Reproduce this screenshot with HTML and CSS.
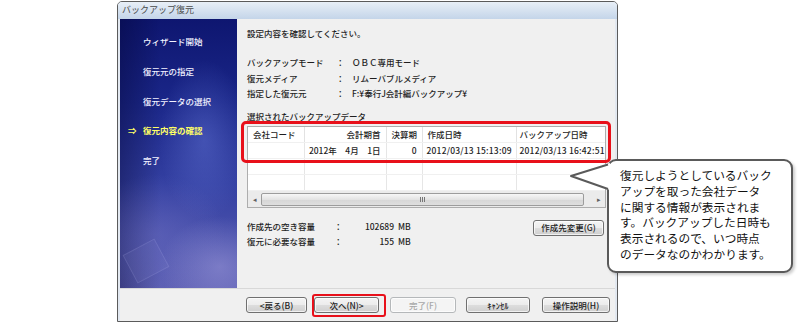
FILE: index.html
```html
<!DOCTYPE html>
<html lang="ja">
<head>
    <meta charset="UTF-8">
    <meta name="viewport" content="width=device-width, initial-scale=1.0">
    <title>バックアップ復元</title>
    <link rel="stylesheet" href="styles.css">
</head>
<body>
    <div class="window">
        <div class="titlebar">バックアップ復元</div>
        <div class="client">
            <div class="main">
                <ul class="steps">
                    <li>ウィザード開始</li>
                    <li>復元元の指定</li>
                    <li>復元データの選択</li>
                    <li class="current">復元内容の確認</li>
                    <li>完了</li>
                </ul>
                <div class="content">
                    <p class="lead">設定内容を確認してください。</p>
                    <div class="summary">
                        <span>バックアップモード</span><span>：</span><span>ＯＢＣ専用モード</span>
                        <span>復元メディア</span><span>：</span><span>リムーバブルメディア</span>
                        <span>指定した復元元</span><span>：</span><span>F:¥奉行J会計編バックアップ¥</span>
                    </div>
                    <p class="caption">選択されたバックアップデータ</p>
                    <div class="list">
                        <table class="grid">
                            <colgroup>
                                <col style="width:56px">
                                <col style="width:82px">
                                <col style="width:36px">
                                <col style="width:94px">
                                <col>
                            </colgroup>
                            <tr>
                                <th>会社コード</th>
                                <th class="right">会計期首</th>
                                <th>決算期</th>
                                <th>作成日時</th>
                                <th>バックアップ日時</th>
                            </tr>
                            <tr>
                                <td></td>
                                <td class="right">2012年　4月　1日</td>
                                <td class="right">0</td>
                                <td class="mono">2012/03/13 15:13:09</td>
                                <td class="mono">2012/03/13 16:42:51</td>
                            </tr>
                            <tr><td></td><td></td><td></td><td></td><td></td></tr>
                            <tr><td></td><td></td><td></td><td></td><td></td></tr>
                        </table>
                        <div class="hscroll">
                            <span class="arrow">&#9666;</span>
                            <span class="thumb"><i></i><i></i><i></i></span>
                            <span class="arrow">&#9656;</span>
                        </div>
                    </div>
                    <div class="space">
                        <div class="space-rows">
                            <span>作成先の空き容量</span><span>：</span><span class="num">102689</span><span>MB</span>
                            <span>復元に必要な容量</span><span>：</span><span class="num">155</span><span>MB</span>
                        </div>
                        <button class="btn btn-dest">作成先変更(G)</button>
                    </div>
                </div>
            </div>
            <div class="footer">
                <button class="btn btn-back">&lt;戻る(B)</button>
                <button class="btn btn-next">次へ(N)&gt;</button>
                <button class="btn btn-finish" disabled>完了(F)</button>
                <button class="btn btn-cancel">ｷｬﾝｾﾙ</button>
                <button class="btn btn-help">操作説明(H)</button>
            </div>
        </div>
    </div>

    <div class="mark mark-list"></div>
    <div class="mark mark-next"></div>

    <div class="balloon">
        復元しようとしているバック<br>
        アップを取った会社データ<br>
        に関する情報が表示されま<br>
        す。バックアップした日時も<br>
        表示されるので、いつ時点<br>
        のデータなのかわかります。
    </div>
    <svg class="balloon-tail" width="46" height="34" viewBox="0 0 46 34">
        <polygon points="42,3 3,16 42,30" fill="#fff"/>
        <rect x="37" y="4" width="6" height="25" fill="#fff"/>
        <polyline points="40,4.5 3,16 40,29" fill="none" stroke="#5a5a5a" stroke-width="2" stroke-linejoin="round"/>
    </svg>
</body>
</html>
```

FILE: styles.css
```css
* {
    box-sizing: border-box;
}
body {
    margin: 0;
    height: 323px;
    overflow: hidden;
    position: relative;
    background-color: #fff;
    font-family: "Noto Sans CJK JP", sans-serif;
    font-size: 8.5px;
    font-weight: 500;
    color: #1e1e1e;
}
.window {
    margin: 1px 0 0 117px;
    width: 501px;
    height: 321px;
    border: 1px solid #5b5b5b;
    border-radius: 5px 5px 0 0;
    background-color: #e2e8f0;
    display: flex;
    flex-direction: column;
}
.titlebar {
    height: 17px;
    padding-left: 4px;
    line-height: 16px;
    font-size: 9px;
    font-weight: 400;
    color: #4a4a4a;
    background: linear-gradient(#e8eff7, #c4d5e9);
    border-radius: 4px 4px 0 0;
}
.client {
    flex: 1;
    margin: 0 2px 0;
    background-color: #f0f0f0;
    display: flex;
    flex-direction: column;
}
.main {
    display: flex;
    height: 269px;
}

/* left wizard steps */
.steps {
    width: 117px;
    margin: 0;
    padding: 8px 0 0 23px;
    list-style: none;
    position: relative;
    overflow: hidden;
    background:
        radial-gradient(ellipse 45px 80px at 72% 45%, rgba(120, 140, 235, 0.35), transparent),
        radial-gradient(ellipse 60px 50px at 85% 92%, rgba(170, 165, 225, 0.45), transparent),
        radial-gradient(ellipse 70px 60px at 30% 80%, rgba(120, 120, 200, 0.35), transparent),
        linear-gradient(90deg, rgba(0, 0, 40, 0.35), transparent 35%),
        linear-gradient(#0e1670, #1a2688 30%, #3440a2 62%, #5d60b4);
}
.steps::after {
    content: "";
    position: absolute;
    left: 8px;
    top: 226px;
    width: 34px;
    height: 30px;
    border: 1px solid rgba(190, 190, 240, 0.15);
    background-color: rgba(160, 160, 230, 0.08);
    transform: rotate(-28deg);
}
.steps li {
    height: 29.8px;
    line-height: 29.8px;
    color: #f2f2ff;
}
.steps li.current {
    color: #ffff66;
    font-weight: bold;
}
.steps li.current::before {
    content: "⇒";
    display: inline-block;
    width: 15px;
    margin-left: -15px;
}

/* right side */
.content {
    flex: 1;
    padding: 7px 9px 0 10px;
}
.lead {
    margin: 0;
    line-height: 14px;
}
.summary {
    display: grid;
    grid-template-columns: 89px 16px auto;
    margin-top: 15px;
    line-height: 15.5px;
}
.caption {
    margin: 7px 0 0;
    line-height: 14px;
}
.list {
    margin-top: 3px;
    height: 82px;
    border: 1px solid #adadad;
    background-color: #fff;
}
.grid {
    width: 100%;
    border-collapse: collapse;
    table-layout: fixed;
}
.grid th,
.grid td {
    height: 16px;
    padding: 0 4px;
    border-right: 1px solid #e6e6e6;
    border-bottom: 1px solid #f0f0f0;
    font-weight: 500;
    text-align: left;
    white-space: nowrap;
    overflow: hidden;
    line-height: 15px;
}
.grid th {
    padding-left: 5px;
    border-right-color: #e2e2e2;
}
.grid th:last-child,
.grid td:last-child {
    border-right: none;
    padding-left: 3px;
}
.grid .right {
    text-align: right;
    padding-right: 5px;
}
.grid .mono {
    letter-spacing: 0.2px;
}
.hscroll {
    display: flex;
    align-items: center;
    height: 16px;
    background-color: #ebebeb;
    padding: 1px 0;
}
.arrow {
    width: 13px;
    text-align: center;
    font-size: 7px;
    color: #606060;
}
.thumb {
    flex: 1;
    height: 13px;
    margin-right: 8px;
    border: 1px solid #9c9c9c;
    border-radius: 2px;
    background: linear-gradient(#f6f6f6, #e3e3e3 50%, #d6d6d6 51%, #dedede);
    display: flex;
    justify-content: center;
    align-items: center;
    gap: 1px;
}
.thumb i {
    width: 1px;
    height: 5px;
    background-color: #777;
}
.space {
    display: flex;
    justify-content: space-between;
    align-items: flex-start;
    margin-top: 11px;
}
.space-rows {
    display: grid;
    grid-template-columns: 87px 18px 46px auto;
    line-height: 15.5px;
}
.space-rows .num {
    text-align: right;
    padding-right: 4px;
}

/* buttons */
.btn {
    height: 16px;
    padding: 0;
    border: 1px solid #707070;
    border-radius: 3px;
    background: linear-gradient(#f4f4f4, #ececec 50%, #dddddd 51%, #cfcfcf);
    box-shadow: inset 0 0 0 1px rgba(255, 255, 255, 0.7);
    font-family: inherit;
    font-size: 8.5px;
    font-weight: 500;
    line-height: 13px;
    color: #222;
}
.btn:disabled {
    border-color: #b5b8ba;
    background: #f4f4f4;
    color: #a8a8a8;
}
.btn-dest {
    width: 71px;
    margin: 1px 2px 0 0;
}
.footer {
    flex: 1;
    border-top: 1px solid #d8d8d8;
    display: flex;
    align-items: flex-start;
    padding: 8px 0 0 126px;
}
.btn-back {
    width: 61px;
}
.btn-next {
    width: 65px;
    margin-left: 7px;
}
.btn-finish {
    width: 66px;
    margin-left: 11px;
}
.btn-cancel {
    width: 64px;
    margin-left: 10px;
}
.btn-help {
    width: 68px;
    margin-left: 12px;
}

/* annotations over the screenshot */
.mark {
    position: absolute;
    border: 3px solid #e8101a;
    border-radius: 5px;
}
.mark-list {
    left: 241px;
    top: 121px;
    width: 370px;
    height: 42px;
}
.mark-next {
    left: 312px;
    top: 294px;
    width: 74px;
    height: 23px;
    border-width: 2px;
    border-radius: 3px;
}
.balloon {
    position: absolute;
    left: 607px;
    top: 159px;
    width: 186px;
    height: 114px;
    padding: 6px 0 0 11px;
    border: 2px solid #5a5a5a;
    border-radius: 9px;
    background-color: #fff;
    box-shadow: 2px 2px 3px rgba(0, 0, 0, 0.2);
    font-size: 11.7px;
    font-weight: 400;
    line-height: 15.8px;
    color: #111;
    white-space: nowrap;
}
.balloon-tail {
    position: absolute;
    left: 568px;
    top: 160px;
}
```
